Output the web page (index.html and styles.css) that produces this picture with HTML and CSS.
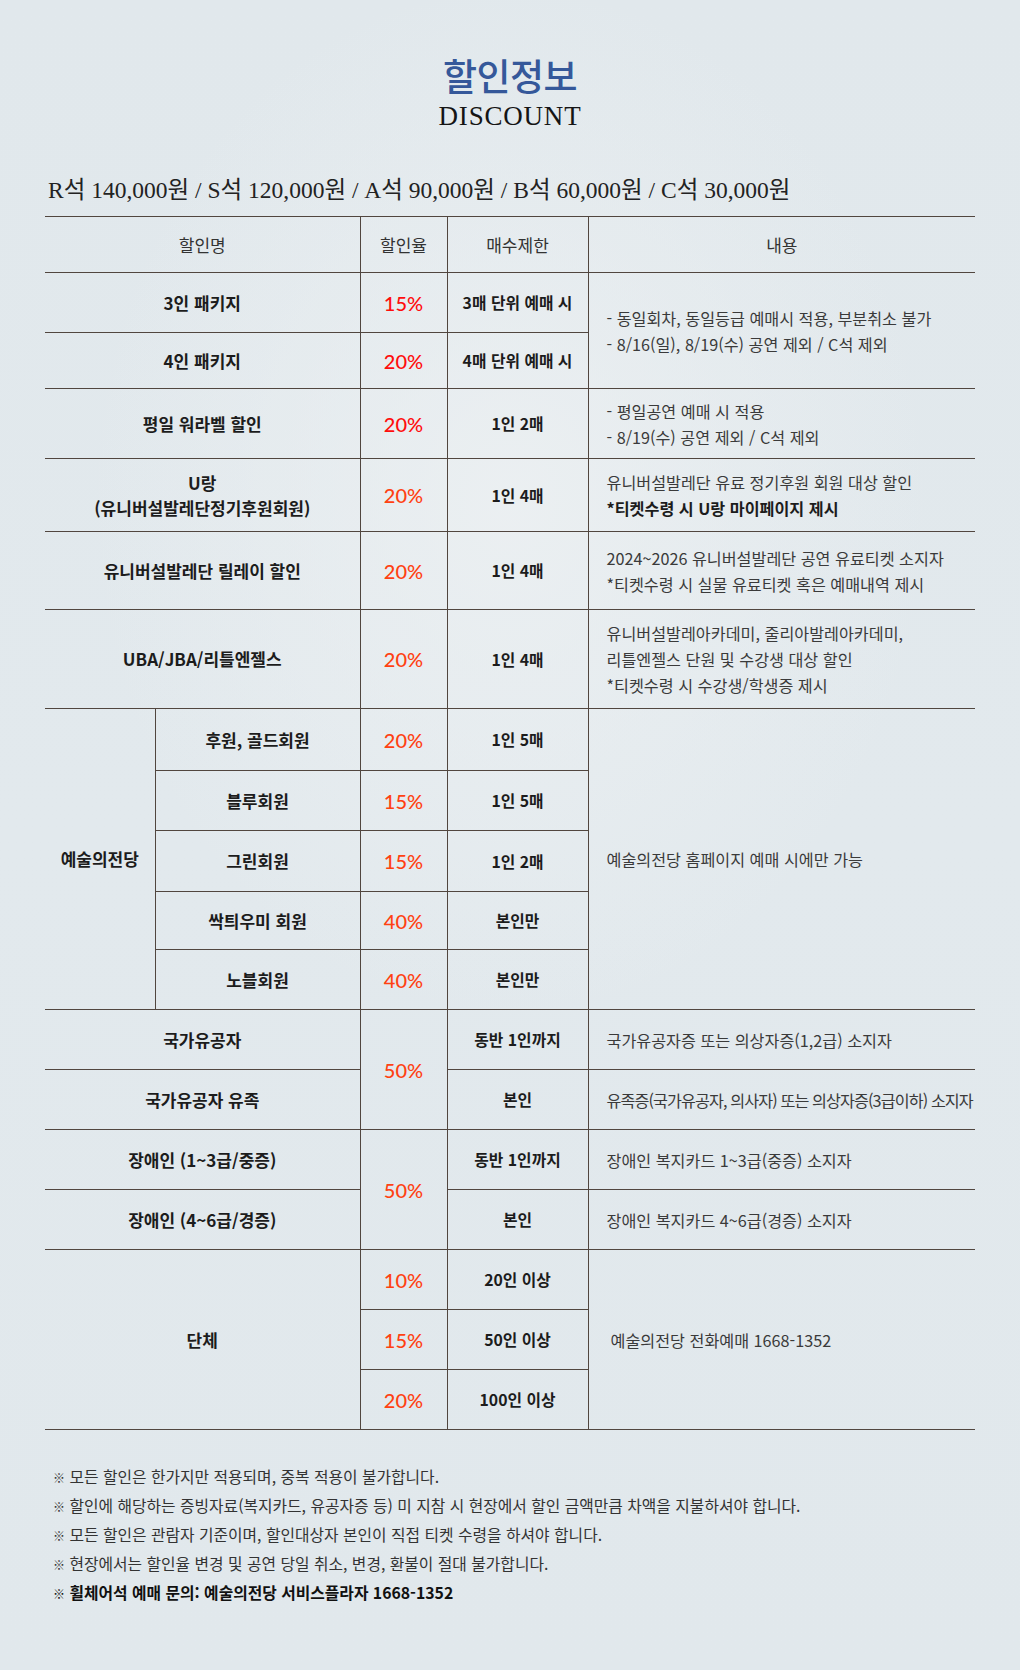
FILE: index.html
```html
<!DOCTYPE html>
<html lang="ko">
<head>
<meta charset="utf-8">
<title>할인정보 DISCOUNT</title>
<link rel="stylesheet" href="styles.css">
</head>
<body>
<main class="page">
  <header class="heading">
    <h1 class="title">할인정보</h1>
    <p class="subtitle">DISCOUNT</p>
  </header>
  <p class="prices">R석 140,000원 / S석 120,000원 / A석 90,000원 / B석 60,000원 / C석 30,000원</p>
  <table class="discount">
    <colgroup>
      <col class="c-group"><col class="c-sub"><col class="c-rate"><col class="c-limit"><col class="c-desc">
    </colgroup>
    <thead>
      <tr class="h56">
        <th colspan="2">할인명</th>
        <th>할인율</th>
        <th>매수제한</th>
        <th>내용</th>
      </tr>
    </thead>
    <tbody>
      <tr class="h60">
        <td colspan="2" class="name">3인 패키지</td>
        <td class="rate red">15%</td>
        <td class="limit">3매 단위 예매 시</td>
        <td rowspan="2" class="desc">- 동일회차, 동일등급 예매시 적용, 부분취소 불가<br>- 8/16(일), 8/19(수) 공연 제외 / C석 제외</td>
      </tr>
      <tr class="h56">
        <td colspan="2" class="name">4인 패키지</td>
        <td class="rate red">20%</td>
        <td class="limit">4매 단위 예매 시</td>
      </tr>
      <tr class="h70">
        <td colspan="2" class="name">평일 워라벨 할인</td>
        <td class="rate red">20%</td>
        <td class="limit">1인 2매</td>
        <td class="desc">- 평일공연 예매 시 적용<br>- 8/19(수) 공연 제외 / C석 제외</td>
      </tr>
      <tr class="h73">
        <td colspan="2" class="name two">U랑<br>(유니버설발레단정기후원회원)</td>
        <td class="rate">20%</td>
        <td class="limit">1인 4매</td>
        <td class="desc">유니버설발레단 유료 정기후원 회원 대상 할인<br><strong>*티켓수령 시 U랑 마이페이지 제시</strong></td>
      </tr>
      <tr class="h78">
        <td colspan="2" class="name">유니버설발레단 릴레이 할인</td>
        <td class="rate">20%</td>
        <td class="limit">1인 4매</td>
        <td class="desc">2024~2026 유니버설발레단 공연 유료티켓 소지자<br>*티켓수령 시 실물 유료티켓 혹은 예매내역 제시</td>
      </tr>
      <tr class="h99">
        <td colspan="2" class="name">UBA/JBA/리틀엔젤스</td>
        <td class="rate">20%</td>
        <td class="limit">1인 4매</td>
        <td class="desc">유니버설발레아카데미, 줄리아발레아카데미,<br>리틀엔젤스 단원 및 수강생 대상 할인<br>*티켓수령 시 수강생/학생증 제시</td>
      </tr>
      <tr class="h62">
        <td rowspan="5" class="name group">예술의전당</td>
        <td class="name">후원, 골드회원</td>
        <td class="rate">20%</td>
        <td class="limit">1인 5매</td>
        <td rowspan="5" class="desc">예술의전당 홈페이지 예매 시에만 가능</td>
      </tr>
      <tr class="h60">
        <td class="name">블루회원</td>
        <td class="rate">15%</td>
        <td class="limit">1인 5매</td>
      </tr>
      <tr class="h61">
        <td class="name">그린회원</td>
        <td class="rate">15%</td>
        <td class="limit">1인 2매</td>
      </tr>
      <tr class="h58">
        <td class="name">싹틔우미 회원</td>
        <td class="rate">40%</td>
        <td class="limit">본인만</td>
      </tr>
      <tr class="h60">
        <td class="name">노블회원</td>
        <td class="rate">40%</td>
        <td class="limit">본인만</td>
      </tr>
      <tr class="h60">
        <td colspan="2" class="name">국가유공자</td>
        <td rowspan="2" class="rate">50%</td>
        <td class="limit">동반 1인까지</td>
        <td class="desc">국가유공자증 또는 의상자증(1,2급) 소지자</td>
      </tr>
      <tr class="h60">
        <td colspan="2" class="name">국가유공자 유족</td>
        <td class="limit">본인</td>
        <td class="desc tight">유족증(국가유공자, 의사자) 또는 의상자증(3급이하) 소지자</td>
      </tr>
      <tr class="h60">
        <td colspan="2" class="name">장애인 (1~3급/중증)</td>
        <td rowspan="2" class="rate">50%</td>
        <td class="limit">동반 1인까지</td>
        <td class="desc">장애인 복지카드 1~3급(중증) 소지자</td>
      </tr>
      <tr class="h60">
        <td colspan="2" class="name">장애인 (4~6급/경증)</td>
        <td class="limit">본인</td>
        <td class="desc">장애인 복지카드 4~6급(경증) 소지자</td>
      </tr>
      <tr class="h60">
        <td colspan="2" rowspan="3" class="name">단체</td>
        <td class="rate">10%</td>
        <td class="limit">20인 이상</td>
        <td rowspan="3" class="desc indent">예술의전당 전화예매 1668-1352</td>
      </tr>
      <tr class="h60">
        <td class="rate">15%</td>
        <td class="limit">50인 이상</td>
      </tr>
      <tr class="h60">
        <td class="rate">20%</td>
        <td class="limit">100인 이상</td>
      </tr>
    </tbody>
  </table>
  <ul class="notes">
    <li><span class="mark">※</span> 모든 할인은 한가지만 적용되며, 중복 적용이 불가합니다.</li>
    <li><span class="mark">※</span> 할인에 해당하는 증빙자료(복지카드, 유공자증 등) 미 지참 시 현장에서 할인 금액만큼 차액을 지불하셔야 합니다.</li>
    <li><span class="mark">※</span> 모든 할인은 관람자 기준이며, 할인대상자 본인이 직접 티켓 수령을 하셔야 합니다.</li>
    <li><span class="mark">※</span> 현장에서는 할인율 변경 및 공연 당일 취소, 변경, 환불이 절대 불가합니다.</li>
    <li class="strong"><span class="mark">※</span> 휠체어석 예매 문의: 예술의전당 서비스플라자 1668-1352</li>
  </ul>
</main>
</body>
</html>
```
FILE: styles.css
```css
html, body {
  margin: 0;
  padding: 0;
}
body {
  min-height: 1670px;
  background:
    radial-gradient(ellipse 420px 520px at 50% 30%, rgba(236, 240, 242, 0.9), rgba(236, 240, 242, 0) 100%),
    linear-gradient(180deg, #e1e8ec 0%, #e2e9ed 50%, #e1e8ec 100%);
  font-family: "Noto Sans CJK KR", "Noto Sans", sans-serif;
  color: #1f1f1f;
}
.page {
  width: 930px;
  margin: 0 0 0 45px;
  padding-top: 53px;
}
.heading {
  text-align: center;
}
.title {
  margin: 0;
  font-family: "Noto Sans CJK KR", sans-serif;
  font-weight: 500;
  font-size: 37px;
  line-height: 44px;
  color: #35589a;
  letter-spacing: -0.5px;
}
.subtitle {
  margin: 4px 0 0;
  font-family: "Liberation Serif", serif;
  font-size: 27px;
  line-height: 30px;
  letter-spacing: 0.8px;
  color: #151515;
}
.prices {
  margin: 44px 0 11px 3px;
  font-family: "Liberation Serif", "Noto Sans CJK KR", serif;
  font-size: 23.5px;
  line-height: 30px;
  color: #222;
}
.discount {
  width: 930px;
  border-collapse: collapse;
  table-layout: fixed;
  border-top: 1px solid #51463f;
  border-bottom: 1px solid #51463f;
}
.c-group { width: 110px; }
.c-sub { width: 205px; }
.c-rate { width: 87px; }
.c-limit { width: 141px; }
.c-desc { width: 387px; }
.discount th,
.discount td {
  border: 1px solid #51463f;
  padding: 0;
  text-align: center;
  vertical-align: middle;
}
.discount tr > :first-child { border-left: none; }
.discount tr > :last-child { border-right: none; }
.discount tbody tr:nth-child(n+8):nth-child(-n+11) > :first-child { border-left: 1px solid #51463f; }
.discount tbody tr:nth-child(n+17) > :first-child { border-left: 1px solid #51463f; }
.discount th {
  font-weight: 400;
  font-size: 17px;
  color: #333;
}
.h56 { height: 56px; }
.h58 { height: 58px; }
.h60 { height: 60px; }
.h61 { height: 61px; }
.h62 { height: 62px; }
.h70 { height: 70px; }
.h73 { height: 73px; }
.h78 { height: 78px; }
.h99 { height: 99px; }
.name {
  font-weight: 700;
  font-size: 17px;
  line-height: 24px;
  color: #1c1c1c;
}
.name.two {
  line-height: 25px;
}
.rate {
  font-family: Lato, "Liberation Sans", sans-serif;
  font-size: 20px;
  font-weight: 500;
  color: #ff4112;
}
.rate.red {
  color: #ff0d0d;
}
.limit {
  font-weight: 700;
  font-size: 15.8px;
  color: #1c1c1c;
}
.discount td.desc {
  text-align: left;
  padding-left: 18px;
  font-size: 16.2px;
  line-height: 26px;
  color: #3a3a3a;
  white-space: nowrap;
}
.desc strong {
  font-weight: 700;
  color: #1c1c1c;
}
.discount td.desc.tight {
  letter-spacing: -0.9px;
}
.discount td.desc.indent {
  padding-left: 22px;
}
.notes {
  list-style: none;
  margin: 32px 0 0;
  padding: 0 0 0 8px;
  font-size: 15.8px;
  line-height: 29px;
  color: #333;
}
.notes li {
  height: 29px;
}
.notes .mark {
  font-size: 12px;
  line-height: 1;
}
.notes .strong {
  font-weight: 700;
  color: #111;
}
```
